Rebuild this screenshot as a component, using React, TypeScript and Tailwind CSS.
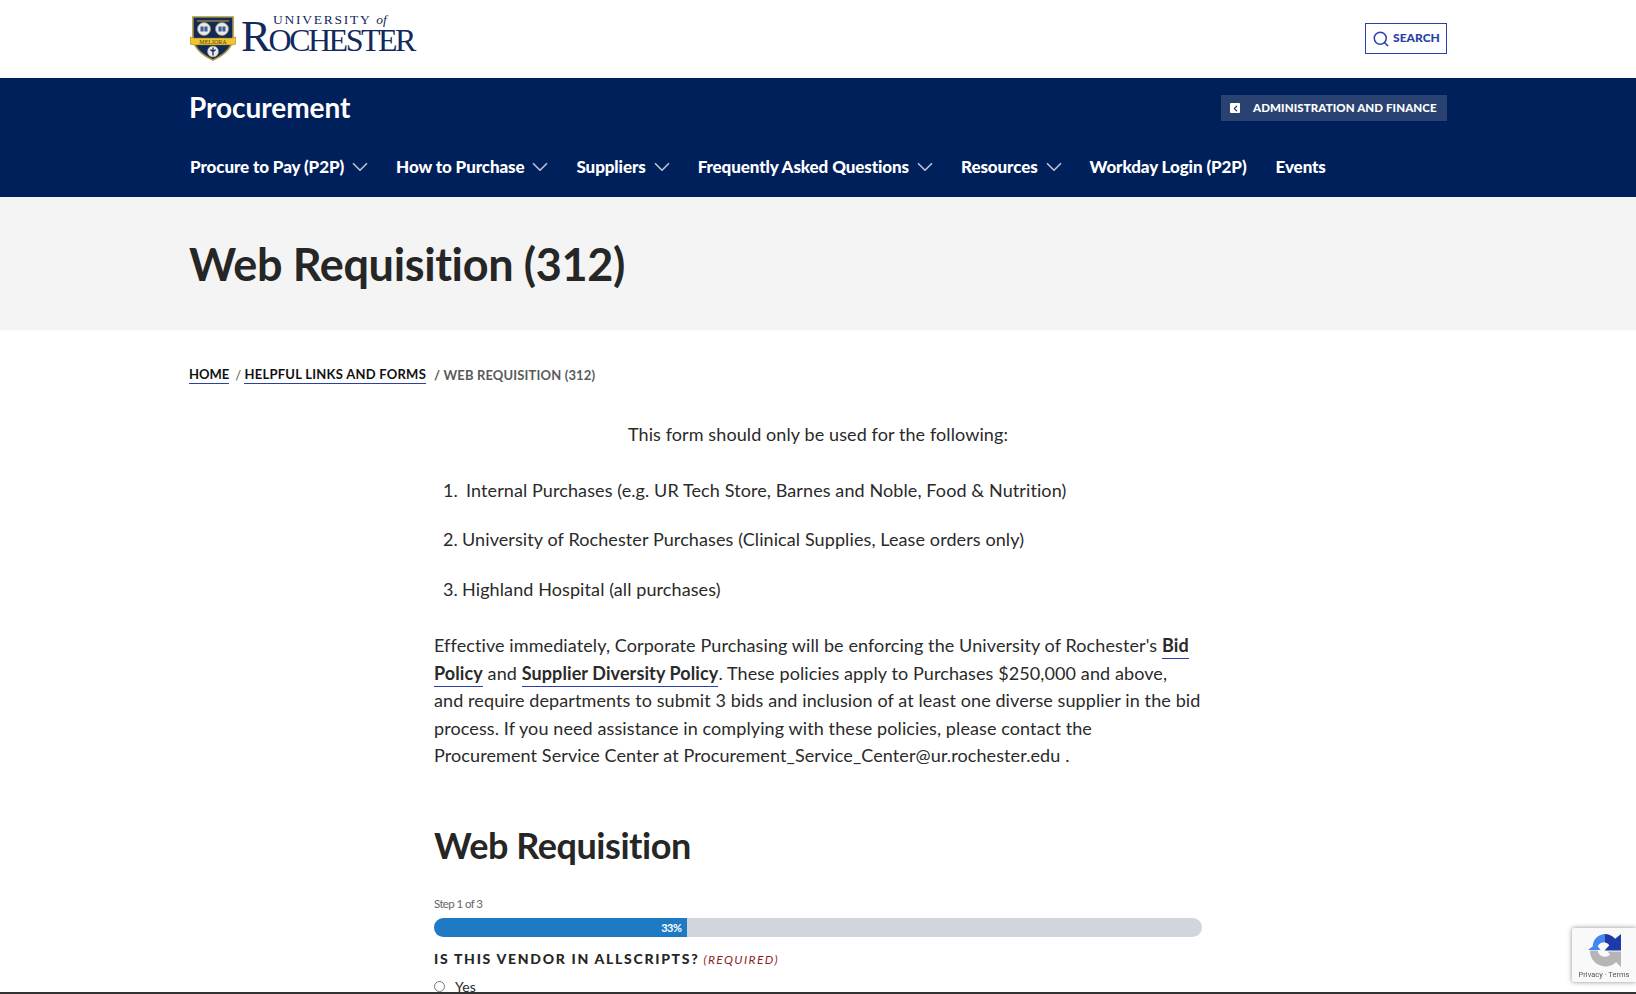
import { ChevronDown, ChevronLeft, Search } from "lucide-react";

const NAV = [
  { label: "Procure to Pay (P2P)", caret: true },
  { label: "How to Purchase", caret: true },
  { label: "Suppliers", caret: true },
  { label: "Frequently Asked Questions", caret: true },
  { label: "Resources", caret: true },
  { label: "Workday Login (P2P)", caret: false },
  { label: "Events", caret: false },
];

function Shield() {
  return (
    <svg width="46" height="45" viewBox="0 0 46 45" className="shrink-0">
      <path d="M3 1h40v19c0 12-9 19-20 24C12 39 3 32 3 20z" fill="#12295d" stroke="#a8923a" strokeWidth="1.6" />
      <path d="M7 4h32v2H7z" fill="#a8923a" opacity=".6" />
      <circle cx="14" cy="13" r="6.5" fill="#e6eaf0" stroke="#a8923a" strokeWidth=".8" />
      <circle cx="32" cy="13" r="6.5" fill="#e6eaf0" stroke="#a8923a" strokeWidth=".8" />
      <path d="M10.5 10.5h7v5h-7zM28.5 10.5h7v5h-7z" fill="#3f5c94" />
      <path d="M14 10v6M32 10v6" stroke="#e6eaf0" strokeWidth=".8" />
      <path d="M0 21l4 1h38l4-1v7l-4 1H4l-4-1z" fill="#f1c531" stroke="#7b6a20" strokeWidth=".5" />
      <text x="23" y="27.5" textAnchor="middle" fontSize="6" fill="#4a3f10" fontFamily="Liberation Serif, serif">MELIORA</text>
      <circle cx="23" cy="35.5" r="5.5" fill="#e6eaf0" stroke="#a8923a" strokeWidth=".6" />
      <path d="M23 31.5v8M20.5 33.5c1 2 4 2 5 0" stroke="#12295d" strokeWidth="1.3" fill="none" />
    </svg>
  );
}

function Recaptcha() {
  return (
    <div className="fixed right-0 bottom-[12px] w-[64px] h-[54px] bg-[#f9f9f9] rounded-l-[2px] shadow-[0_0_5px_rgba(0,0,0,0.45)] flex flex-col items-center pt-[5px] overflow-hidden">
      <svg width="35" height="35" viewBox="0 0 36 36" fill="none">
        <path d="M18 17.5H1l5-4A13 13 0 0 1 18 1v8.5a8 8 0 0 0-7 4l3 4z" fill="#4285f4" />
        <path d="M18 1a15 15 0 0 1 11 5l6-5v17H18l5-5.5a8 8 0 0 0-5-3z" fill="#1c3aa9" />
        <path d="M3 18h8a7.5 7.5 0 0 0 13 4l-3-3h14v16l-5-5A16 16 0 0 1 3 18z" fill="#b5b5b5" />
      </svg>
      <span className="text-[7.5px] leading-[10px] text-[#555] font-['Roboto',sans-serif] mt-[2px] whitespace-nowrap">Privacy · Terms</span>
    </div>
  );
}

export default function App() {
  return (
    <div className="h-[994px] overflow-hidden bg-white font-['Lato',sans-serif] text-[#2a2a2a] border-b-2 border-[#333]">
      <header className="h-[78px] flex items-center">
        <div className="w-[1258px] mx-auto flex items-center justify-between">
          <div className="flex items-center gap-[5px] -mt-[1px] pl-[1px]">
            <Shield />
            <div className="font-['Liberation_Serif',serif] text-[#12295d] leading-none -mt-[15px]">
              <div className="text-[13.5px] tracking-[1.75px] pl-[32px] h-[10px]">
                UNIVERSITY <i className="tracking-normal">of</i>
              </div>
              <div className="text-[32px] tracking-[-2.5px] h-[27px]">
                <span className="text-[45px] leading-[27px]">R</span>OCHESTER
              </div>
            </div>
          </div>
          <button className="w-[82px] h-[31px] -mt-[1px] border border-[#2a3fa8] flex items-center justify-center gap-[3px] text-[#2a3fa8] text-[12px] font-black">
            <Search size={18} strokeWidth={2} />
            <span className="-mt-[1px]">SEARCH</span>
          </button>
        </div>
      </header>

      <div className="h-[119px] bg-[#00205b]">
        <div className="w-[1258px] mx-auto">
          <div className="flex items-center justify-between pt-[14px]">
            <div className="text-white text-[28px] leading-[30px] font-bold tracking-[-0.05px]">Procurement</div>
            <div className="w-[226px] h-[26px] mt-[2px] bg-[#2a4272] flex items-center pl-[9px] gap-[13px] text-white text-[11.5px] font-black tracking-[0.1px]">
              <span className="w-[10px] h-[10px] bg-white rounded-[1px] flex items-center justify-center text-[#2a4272]">
                <ChevronLeft size={9} strokeWidth={3.5} />
              </span>
              ADMINISTRATION AND FINANCE
            </div>
          </div>
          <nav className="flex items-center gap-[29px] mt-[32px] pl-[1px]">
            {NAV.map((item) => (
              <div key={item.label} className="flex items-center text-white text-[17px] leading-[20px] font-black tracking-[-0.1px]">
                {item.label}
                {item.caret && <ChevronDown size={26} strokeWidth={1.6} className="text-[#b8bfcc] ml-[3px] -mr-[6px]" />}
              </div>
            ))}
          </nav>
        </div>
      </div>

      <div className="h-[133px] bg-[#f4f4f4] flex items-center">
        <h1 className="w-[1258px] mx-auto text-[45px] leading-[54px] font-bold text-[#262626] tracking-[-0.35px]">Web Requisition (312)</h1>
      </div>

      <div className="w-[1258px] mx-auto pt-[35px] flex items-center text-[13px] leading-[18px] font-bold tracking-[0.25px] text-[#111]">
        <span className="border-b border-[#2a3fa8] tracking-[0px]">HOME</span>
        <span className="ml-[6px] mr-[2px] font-normal text-[#555]">/</span>
        <span className="ml-[1px] border-b border-[#2a3fa8]">HELPFUL LINKS AND FORMS</span>
        <span className="ml-[8px] text-[#5a5a5a] tracking-[0.15px]">/ WEB REQUISITION (312)</span>
      </div>

      <main className="w-[768px] ml-[434px] text-[18px] leading-[27.5px] tracking-[0.1px]">
        <p className="text-center mt-[37px]">This form should only be used for the following:</p>
        <ol className="mt-[28px] ml-[9px]">
          <li className="flex"><span className="w-[23px]">1.</span>Internal Purchases (e.g. UR Tech Store, Barnes and Noble, Food &amp; Nutrition)</li>
          <li className="flex mt-[22px]"><span className="w-[19px]">2.</span>University of Rochester Purchases (Clinical Supplies, Lease orders only)</li>
          <li className="flex mt-[22px]"><span className="w-[19px]">3.</span>Highland Hospital (all purchases)</li>
        </ol>
        <p className="mt-[29px]">
          Effective immediately, Corporate Purchasing will be enforcing the University of Rochester's{" "}
          <b className="border-b border-[#2a3fa8] pb-[2px]">Bid</b>
          <br />
          <b className="border-b border-[#2a3fa8] pb-[2px]">Policy</b> and{" "}
          <b className="border-b border-[#2a3fa8] pb-[2px]">Supplier Diversity Policy</b>. These policies apply to Purchases $250,000 and above,
          <br />
          and require departments to submit 3 bids and inclusion of at least one diverse supplier in the bid
          <br />
          process. If you need assistance in complying with these policies, please contact the
          <br />
          Procurement Service Center at Procurement_Service_Center@ur.rochester.edu .
        </p>
        <h2 className="mt-[53px] text-[36px] leading-[44px] font-bold text-[#262626] tracking-[-0.45px]">Web Requisition</h2>
        <div className="mt-[30px] text-[11.5px] leading-[14px] text-[#666] tracking-[-0.6px]">Step 1 of 3</div>
        <div className="mt-[7px] h-[19px] rounded-full bg-[#d2d5dd] overflow-hidden">
          <div className="w-[33%] h-full bg-[#1f7ac4] text-white text-[11px] leading-[19px] font-bold text-right pr-[6px] tracking-[-0.5px]">33%</div>
        </div>
        <div className="mt-[12px] flex items-baseline gap-[4px] leading-[20px]">
          <span className="text-[14px] font-black tracking-[1.7px] text-[#262626]">IS THIS VENDOR IN ALLSCRIPTS?</span>
          <i className="text-[12px] tracking-[1.4px] text-[#8a1f1f]">(REQUIRED)</i>
        </div>
        <label className="mt-[7px] flex items-center gap-[10px] text-[14px] leading-[20px]">
          <span className="w-[11px] h-[11px] rounded-full border border-[#777]" />
          Yes
        </label>
      </main>
      <Recaptcha />
    </div>
  );
}
